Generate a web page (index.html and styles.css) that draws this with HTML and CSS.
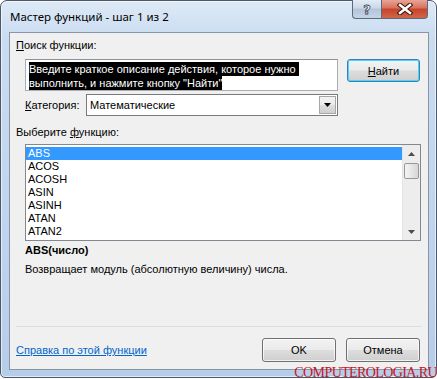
FILE: index.html
```html
<!DOCTYPE html>
<html lang="ru">
<head>
  <meta charset="UTF-8" />
  <meta name="viewport" content="width=device-width, initial-scale=1.0"/>
  <title>Мастер функций</title>
  <link rel="stylesheet" href="styles.css">
</head>
<body>
  <div class="window">
    <!-- Title bar -->
    <div class="titlebar">
      <span class="title">Мастер функций - шаг 1 из 2</span>
      <div class="caption-buttons">
        <span class="cap-btn help">?</span>
        <span class="cap-btn close">
          <svg width="16" height="12" viewBox="0 0 16 12">
            <path d="M3 2 L13 10 M13 2 L3 10" stroke="#3b1208" stroke-width="4.6" stroke-linecap="square"/>
            <path d="M3 2 L13 10 M13 2 L3 10" stroke="#fff" stroke-width="2.6" stroke-linecap="square"/>
          </svg>
        </span>
      </div>
    </div>

    <div class="client">
      <div class="label"><u>П</u>оиск функции:</div>

      <div class="search-row">
        <div class="search-box">
          <span class="sel">Введите краткое описание действия, которое нужно </span>
          <span class="sel">выполнить, и нажмите кнопку "Найти"</span>
        </div>
        <button class="btn btn-default"><u>Н</u>айти</button>
      </div>

      <div class="category-row">
        <span class="cat-label"><u>К</u>атегория:</span>
        <div class="select">
          <span class="select-value">Математические</span>
          <span class="select-arrow">
            <svg width="7" height="4" viewBox="0 0 7 4"><path d="M0 0 H7 L3.5 4 Z" fill="#000"/></svg>
          </span>
        </div>
      </div>

      <div class="label label-list">Выберите <u>ф</u>ункцию:</div>

      <div class="listbox">
        <div class="items">
          <div class="item selected">ABS</div>
          <div class="item">ACOS</div>
          <div class="item">ACOSH</div>
          <div class="item">ASIN</div>
          <div class="item">ASINH</div>
          <div class="item">ATAN</div>
          <div class="item">ATAN2</div>
        </div>
        <div class="scrollbar">
          <span class="sb-arrow">
            <svg width="7" height="4" viewBox="0 0 7 4"><path d="M0 4 H7 L3.5 0 Z" fill="#4d4d4d"/></svg>
          </span>
          <span class="sb-thumb"></span>
          <span class="sb-track"></span>
          <span class="sb-arrow">
            <svg width="7" height="4" viewBox="0 0 7 4"><path d="M0 0 H7 L3.5 4 Z" fill="#4d4d4d"/></svg>
          </span>
        </div>
      </div>

      <div class="fn-signature">ABS(число)</div>
      <div class="fn-desc">Возвращает модуль (абсолютную величину) числа.</div>

      <div class="divider"></div>

      <div class="bottom-row">
        <a class="help-link" href="#">Справка по этой функции</a>
        <div class="actions">
          <button class="btn">OK</button>
          <button class="btn">Отмена</button>
        </div>
      </div>
    </div>
  </div>

  <div class="watermark">COMPUTEROLOGIA.RU</div>
</body>
</html>
```

FILE: styles.css
```css
body {
  margin: 0;
  padding: 0;
  background: #fff;
  font-family: "Liberation Sans", Arial, sans-serif;
  font-size: 11px;
  color: #000;
  position: relative;
  width: 437px;
  height: 379px;
  overflow: hidden;
}

.window {
  box-sizing: border-box;
  width: 437px;
  height: 378px;
  display: flex;
  flex-direction: column;
  border: 1px solid #4a5869;
  border-radius: 7px 7px 5px 5px;
  background: linear-gradient(180deg, #dde9f6 0%, #cadcf1 10%, #bfd4ee 60%, #b6cde9 100%);
  box-shadow: inset 0 0 0 1px rgba(255, 255, 255, 0.6);
}

.titlebar {
  height: 31px;
  display: flex;
  align-items: flex-start;
  padding-left: 9px;
  flex-shrink: 0;
}

.title {
  margin-top: 8px;
  font-family: "Noto Sans", sans-serif;
  font-size: 11.5px;
  line-height: 16px;
  color: #000;
}

.caption-buttons {
  margin-left: auto;
  margin-right: 8px;
  margin-top: -1px;
  display: flex;
}

.cap-btn {
  height: 19px;
  display: flex;
  align-items: center;
  justify-content: center;
  border: 1px solid #5b6a7c;
  border-top: none;
  box-sizing: border-box;
}

.help {
  width: 29px;
  border-radius: 0 0 0 4px;
  border-right: none;
  background: linear-gradient(180deg, #e3ebf5 0%, #cbd8e8 45%, #b3c4d9 50%, #c6d5e6 100%);
  color: #fff;
  font-family: "DejaVu Sans", sans-serif;
  font-weight: bold;
  font-size: 13px;
  -webkit-text-stroke: 0.8px #3a4656;
}

.close {
  width: 47px;
  border-radius: 0 0 4px 0;
  background: linear-gradient(180deg, #e8a596 0%, #d7715d 45%, #c4432b 50%, #d1664a 100%);
}

.client {
  flex: 1;
  margin: 0 7px 7px 8px;
  border: 1px solid #8795a7;
  background: #f0f0f0;
  padding: 0 7px 7px 6px;
  display: flex;
  flex-direction: column;
}

.label {
  line-height: 16px;
  margin-top: 4px;
}

.search-row {
  display: flex;
  align-items: flex-start;
  gap: 9px;
  margin-top: 6px;
  padding-left: 9px;
}

.search-box {
  box-sizing: border-box;
  width: 313px;
  height: 32px;
  background: #fff;
  border: 1px solid #abadb3;
  border-top-color: #8e9199;
  padding: 2px 3px;
  display: flex;
  flex-direction: column;
  align-items: flex-start;
}

.sel {
  background: #000;
  color: #fff;
  line-height: 14px;
  white-space: pre;
}

.btn {
  box-sizing: border-box;
  width: 74px;
  height: 24px;
  font-family: inherit;
  font-size: 11px;
  color: #000;
  border: 1px solid #707070;
  border-radius: 3px;
  background: linear-gradient(180deg, #f2f2f2 0%, #ebebeb 48%, #dddddd 52%, #cfcfcf 100%);
  box-shadow: inset 0 0 0 1px rgba(255, 255, 255, 0.7);
  padding: 0;
}

.btn-default {
  width: 73px;
  height: 23px;
  border-color: #3c7fb1;
  box-shadow: inset 0 0 0 1px #48d5fd;
}

.category-row {
  display: flex;
  align-items: center;
  margin-top: 3px;
  padding-left: 9px;
}

.cat-label {
  width: 61px;
}

.select {
  box-sizing: border-box;
  width: 252px;
  height: 22px;
  background: #fff;
  border: 1px solid #7a7a7a;
  display: flex;
  align-items: stretch;
}

.select-value {
  flex: 1;
  padding-left: 3px;
  line-height: 20px;
}

.select-arrow {
  width: 17px;
  display: flex;
  align-items: center;
  justify-content: center;
  margin: 1px;
  border: 1px solid #a6a6a6;
  box-sizing: border-box;
  background: linear-gradient(180deg, #f2f2f2 0%, #ebebeb 48%, #dddddd 52%, #cfcfcf 100%);
}

.label-list {
  margin-top: 8px;
}

.listbox {
  box-sizing: border-box;
  width: 396px;
  height: 97px;
  margin-top: 4px;
  margin-left: 9px;
  background: #fff;
  border: 1px solid #828790;
  display: flex;
}

.items {
  flex: 1;
  padding-top: 2px;
}

.item {
  height: 13px;
  line-height: 13px;
  padding-left: 2px;
}

.item.selected {
  background: #3399ff;
  color: #fff;
}

.scrollbar {
  width: 17px;
  display: flex;
  flex-direction: column;
  background: #ededed;
  border-left: 1px solid #e4e4e4;
}

.sb-arrow {
  height: 17px;
  display: flex;
  align-items: center;
  justify-content: center;
}

.sb-thumb {
  height: 14px;
  margin: 1px 1px 0 1px;
  border: 1px solid #979797;
  border-radius: 2px;
  background: linear-gradient(90deg, #f4f4f4 0%, #e6e6e6 50%, #d6d6d6 100%);
}

.sb-track {
  flex: 1;
}

.fn-signature {
  font-weight: bold;
  line-height: 16px;
  margin-top: 1px;
  padding-left: 9px;
}

.fn-desc {
  line-height: 16px;
  margin-top: 3px;
  padding-left: 9px;
}

.divider {
  margin-top: auto;
  height: 1px;
  background: #d5dfe5;
  margin-right: -1px;
}

.bottom-row {
  display: flex;
  align-items: center;
  margin-top: 11px;
}

.help-link {
  color: #0066cc;
  text-decoration: underline;
  line-height: 16px;
}

.actions {
  margin-left: auto;
  display: flex;
  gap: 10px;
  margin-right: 1px;
}

.watermark {
  position: absolute;
  right: 0;
  bottom: 0;
  font-family: "Liberation Serif", serif;
  font-size: 14px;
  line-height: 12px;
  color: #c8161d;
  letter-spacing: -0.6px;
}
```
